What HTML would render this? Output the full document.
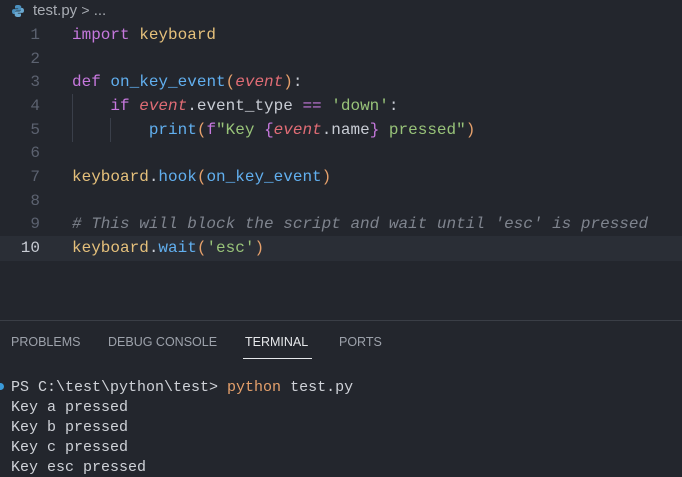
<!DOCTYPE html>
<html><head><meta charset="utf-8"><style>
body{margin:0;width:682px;height:477px;background:#23262d;overflow:hidden;position:relative;font-family:"Liberation Mono",monospace}
.bc{position:absolute;left:12px;top:2px;font:15px "Liberation Sans",sans-serif;color:#a8acb3}
.ln{position:absolute;left:0;width:40px;text-align:right;font-size:16px;color:#5c6270}
.code{position:absolute;left:72px;font-size:16px;white-space:pre;color:#c8ccd4}
.hl{position:absolute;left:0;right:0;top:236px;height:25px;background:#2a2e36}
.k{color:#c678dd}.m{color:#e5c07b}.f{color:#61afef}.p{color:#e5a06b}.e{color:#e06c75;font-style:italic}.s{color:#98c379}.c{color:#7f848e;font-style:italic}
.guide{position:absolute;width:1px;background:#3a3f4a}
.tabs{position:absolute;top:335px;font:12.5px "Liberation Sans",sans-serif;color:#9da2ab}
.term{position:absolute;left:11px;font-size:15px;white-space:pre;color:#cfd2d8}
</style></head><body>
<svg style="position:absolute;left:11px;top:4px" width="14" height="14" viewBox="0 0 14 14"><path d="M7 1C4 1 4 2 4 3v1.5h3.2v.6H3C1.5 5.1 1 6 1 7.5S1.6 10 3 10h1V8.4c0-1 .8-1.8 1.8-1.8h3c.9 0 1.5-.7 1.5-1.5V3c0-1-1-2-3.3-2z" fill="#4a8fbd"/><path d="M7 13c3 0 3-1 3-2V9.5H6.8v-.6H11c1.5 0 2-.9 2-2.4S12.4 4 11 4h-1v1.6c0 1-.8 1.8-1.8 1.8h-3c-.9 0-1.5.7-1.5 1.5V11c0 1 1 2 3.3 2z" fill="#6aa8d0"/></svg>
<div class="bc" style="left:33px">test.py <span style="font-size:14px">&gt;</span> ...</div>
<div class="hl"></div>
<div class="guide" style="left:72px;top:94px;height:48px"></div>
<div class="guide" style="left:110px;top:118px;height:24px"></div>
<div class="ln" style="top:26px">1</div>
<div class="ln" style="top:50px">2</div>
<div class="ln" style="top:73px">3</div>
<div class="ln" style="top:97px">4</div>
<div class="ln" style="top:121px">5</div>
<div class="ln" style="top:144px">6</div>
<div class="ln" style="top:168px">7</div>
<div class="ln" style="top:192px">8</div>
<div class="ln" style="top:215px">9</div>
<div class="ln" style="top:239px;color:#c8ccd4">10</div>
<div class="code" style="top:26px"><span class="k">import</span> <span class="m">keyboard</span></div>
<div class="code" style="top:73px"><span class="k">def</span> <span class="f">on_key_event</span><span class="p">(</span><span class="e">event</span><span class="p">)</span>:</div>
<div class="code" style="top:97px">    <span class="k">if</span> <span class="e">event</span>.event_type <span class="k">==</span> <span class="s">'down'</span>:</div>
<div class="code" style="top:121px">        <span class="f">print</span><span class="p">(</span><span class="k">f</span><span class="s">"Key </span><span class="k">{</span><span class="e">event</span>.name<span class="k">}</span><span class="s"> pressed"</span><span class="p">)</span></div>
<div class="code" style="top:168px"><span class="m">keyboard</span>.<span class="f">hook</span><span class="p">(</span><span class="f">on_key_event</span><span class="p">)</span></div>
<div class="code c" style="top:215px"># This will block the script and wait until 'esc' is pressed</div>
<div class="code" style="top:239px"><span class="m">keyboard</span>.<span class="f">wait</span><span class="p">(</span><span class="s">'esc'</span><span class="p">)</span></div>
<div style="position:absolute;left:0;right:0;top:320px;height:1px;background:#3a3e46"></div>
<div class="tabs" style="left:11px">PROBLEMS</div>
<div class="tabs" style="left:108px">DEBUG CONSOLE</div>
<div class="tabs" style="left:245px;color:#e6e8eb">TERMINAL</div>
<div style="position:absolute;left:243px;top:358px;width:69px;height:1px;background:#e6e8eb"></div>
<div class="tabs" style="left:339px">PORTS</div>
<div style="position:absolute;left:-3px;top:383px;width:7px;height:7px;border-radius:50%;background:#3a9ad9"></div>
<div class="term" style="top:379px">PS C:\test\python\test&gt; <span style="color:#e5a06b">python</span> test.py</div>
<div class="term" style="top:399px">Key a pressed</div>
<div class="term" style="top:419px">Key b pressed</div>
<div class="term" style="top:439px">Key c pressed</div>
<div class="term" style="top:459px">Key esc pressed</div>
</body></html>
